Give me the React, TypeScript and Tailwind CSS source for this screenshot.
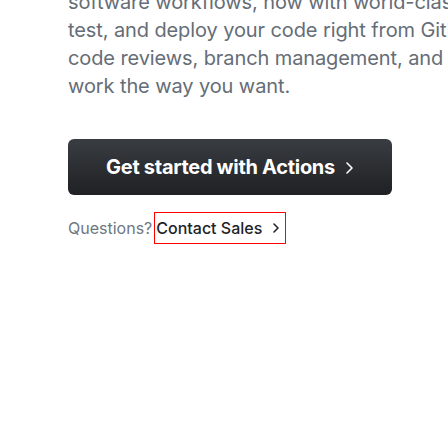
export default function App() {
  const lines = [
    "software workflows, now with world-class CI/CD. Build,",
    "test, and deploy your code right from GitHub. Make",
    "code reviews, branch management, and issue triaging",
    "work the way you want.",
  ]

  return (
    <div className="w-[448px] h-[448px] overflow-hidden bg-white font-['Inter',sans-serif]">
      <div className="pl-[68px]">
        <p className="-mt-[12px] text-[20px] leading-[28px] text-[#656d76] tracking-[-0.1px]">
          {lines.map((line) => (
            <span key={line} className="block whitespace-nowrap">
              {line}
            </span>
          ))}
        </p>

        <a
          href="#"
          className="mt-[39px] flex h-[56px] w-[324px] items-center justify-center gap-[10px] rounded-[6px] bg-gradient-to-b from-[#393c40] to-[#1f2125] text-[20px] font-bold text-white tracking-[-0.3px]"
        >
          <span>Get started with Actions</span>
          <svg width="9" height="14" viewBox="0 0 9 14" fill="none" className="mt-[1px]">
            <path d="M2 2l5 5-5 5" stroke="currentColor" strokeWidth="1.6" strokeLinecap="round" strokeLinejoin="round" />
          </svg>
        </a>

        <div className="mt-[17px] flex items-center text-[16px]">
          <span className="text-[#6e7781]">Questions?</span>
          <a
            href="#"
            className="ml-[2px] flex h-[32px] w-[132px] items-center border border-[#ff0000] pl-[1px] font-medium text-[#1f2328]"
          >
            <span>Contact Sales</span>
            <svg width="8" height="12" viewBox="0 0 8 12" fill="none" className="ml-[10px]">
              <path d="M2 2l4 4-4 4" stroke="currentColor" strokeWidth="1.6" strokeLinecap="round" strokeLinejoin="round" />
            </svg>
          </a>
        </div>
      </div>
    </div>
  )
}
